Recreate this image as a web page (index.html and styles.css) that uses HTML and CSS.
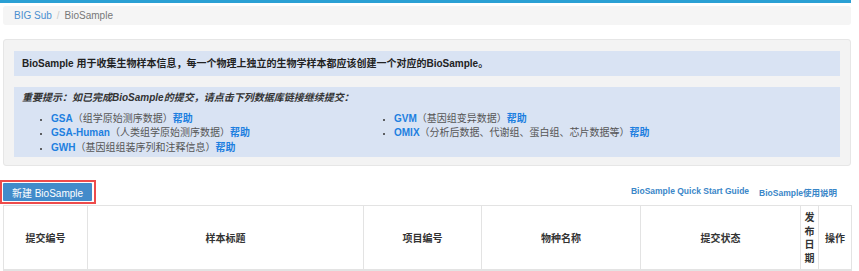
FILE: index.html
```html
<!DOCTYPE html>
<html lang="zh-CN">
<head>
    <meta charset="UTF-8">
    <meta name="viewport" content="width=device-width, initial-scale=1.0">
    <title>BioSample</title>
    <link rel="stylesheet" href="styles.css">
</head>
<body>
    <div class="top-bar"></div>
    <div class="page">
        <ol class="breadcrumb">
            <li><a href="#">BIG Sub</a></li>
            <li class="active">BioSample</li>
        </ol>

        <div class="well">
            <div class="note">
                <b>BioSample</b> 用于收集生物样本信息，每一个物理上独立的生物学样本都应该创建一个对应的<b>BioSample</b>。
            </div>
            <div class="note tips">
                <p class="tips-title">重要提示：如已完成BioSample的提交，请点击下列数据库链接继续提交：</p>
                <div class="tips-list">
                    <ul>
                        <li><a href="#">GSA</a>（组学原始测序数据）<a href="#">帮助</a></li>
                        <li><a href="#">GSA-Human</a>（人类组学原始测序数据）<a href="#">帮助</a></li>
                        <li><a href="#">GWH</a>（基因组组装序列和注释信息）<a href="#">帮助</a></li>
                    </ul>
                    <ul>
                        <li><a href="#">GVM</a>（基因组变异数据）<a href="#">帮助</a></li>
                        <li><a href="#">OMIX</a>（分析后数据、代谢组、蛋白组、芯片数据等）<a href="#">帮助</a></li>
                    </ul>
                </div>
            </div>
        </div>

        <div class="toolbar">
            <span class="highlight"><button class="btn-new" type="button">新建 BioSample</button></span>
            <div class="guide-links">
                <a href="#">BioSample Quick Start Guide</a>
                <a href="#">BioSample使用说明</a>
            </div>
        </div>

        <table class="sample-table">
            <colgroup>
                <col style="width: 84px">
                <col style="width: 276px">
                <col style="width: 118px">
                <col style="width: 159px">
                <col style="width: 160px">
                <col style="width: 18px">
                <col style="width: 33px">
            </colgroup>
            <thead>
                <tr>
                    <th>提交编号</th>
                    <th>样本标题</th>
                    <th>项目编号</th>
                    <th>物种名称</th>
                    <th>提交状态</th>
                    <th class="narrow">发布日期</th>
                    <th>操作</th>
                </tr>
            </thead>
            <tbody>
                <tr>
                    <td></td><td></td><td></td><td></td><td></td><td></td><td></td>
                </tr>
            </tbody>
        </table>
    </div>
</body>
</html>
```

FILE: styles.css
```css
body {
    margin: 0;
    padding: 0;
    font-family: "Liberation Sans", "Noto Sans CJK SC", sans-serif;
    font-size: 10px;
    color: #333;
    background-color: #fff;
}

a {
    text-decoration: none;
}

.top-bar {
    width: 851px;
    height: 3px;
    background-color: #2aa0d4;
}

.page {
    width: 848px;
    padding-left: 3px;
}

.breadcrumb {
    list-style: none;
    display: flex;
    align-items: center;
    margin: 3px 0 0;
    padding: 0 11px;
    height: 19px;
    background-color: #f5f5f5;
    border-radius: 3px;
}

.breadcrumb a {
    color: #4a8fd0;
}

.breadcrumb li.active {
    color: #777;
}

.breadcrumb li + li::before {
    content: "/";
    color: #ccc;
    padding: 0 5px;
}

.well {
    margin-top: 14px;
    padding: 11px 10px 8px;
    background-color: #f3f3f3;
    border: 1px solid #e6e6e6;
    border-radius: 3px;
    display: flex;
    flex-direction: column;
    gap: 11px;
}

.note {
    background-color: #d9e3f3;
    padding: 0 8px;
    line-height: 25px;
    font-weight: bold;
    color: #222;
}

.tips {
    padding: 3px 8px 2px;
    line-height: 14.5px;
    font-weight: normal;
}

.tips-title {
    margin: 0 0 6px;
    padding-top: 1px;
    font-style: italic;
    font-weight: bold;
    color: #333;
}

.tips-list {
    display: grid;
    grid-template-columns: 343px 1fr;
}

.tips-list ul {
    margin: 0;
    padding-left: 29px;
    list-style: disc;
    color: #555;
}

.tips-list li::marker {
    color: #333;
    font-size: 8px;
}

.tips-list a {
    color: #1d7fe0;
    font-weight: bold;
}

.toolbar {
    display: flex;
    justify-content: space-between;
    align-items: center;
    margin-top: 14px;
    margin-left: -3px;
    padding-bottom: 1px;
}

.highlight {
    display: inline-block;
    border: 2px solid #ee4b4b;
    padding: 1px 2px 1px 1px;
}

.btn-new {
    display: block;
    height: 18px;
    width: 89px;
    padding: 0;
    border: none;
    border-radius: 1px;
    background-color: #428bca;
    color: #fff;
    font-family: inherit;
    font-size: 10px;
}

.guide-links {
    display: flex;
    gap: 10px;
    padding-right: 14px;
}

.guide-links a {
    color: #3a86c8;
    font-weight: bold;
    font-size: 8.5px;
}

.sample-table {
    width: 848px;
    border-collapse: collapse;
    table-layout: fixed;
}

.sample-table th,
.sample-table td {
    border: 1px solid #e3e3e3;
}

.sample-table th {
    padding: 4px 2px;
    font-family: "Noto Sans CJK SC", serif;
    font-size: 10px;
    font-weight: bold;
    line-height: 13.7px;
    color: #333;
    text-align: center;
    vertical-align: middle;
    border-bottom: 2px solid #e3e3e3;
}

.sample-table th.narrow {
    padding: 4px 3px;
    word-break: break-all;
}

.sample-table td {
    height: 20px;
}
```
